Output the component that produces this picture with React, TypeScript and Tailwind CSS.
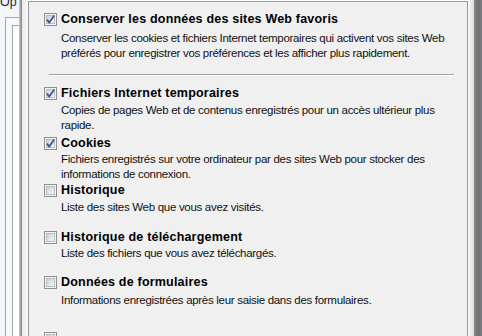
import React from 'react'

type Item = {
  label: string
  checked: boolean
  lines: string[]
  mt: string
  dmt: string
}

const TOP_ITEM: Item = {
  label: 'Conserver les données des sites Web favoris',
  checked: true,
  lines: [
    'Conserver les cookies et fichiers Internet temporaires qui activent vos sites Web',
    'préférés pour enregistrer vos préférences et les afficher plus rapidement.',
  ],
  mt: 'mt-[10px]',
  dmt: 'mt-[4px]',
}

const ITEMS: Item[] = [
  {
    label: 'Fichiers Internet temporaires',
    checked: true,
    lines: [
      'Copies de pages Web et de contenus enregistrés pour un accès ultérieur plus',
      'rapide.',
    ],
    mt: 'mt-[10px]',
    dmt: 'mt-[2px]',
  },
  {
    label: 'Cookies',
    checked: true,
    lines: [
      'Fichiers enregistrés sur votre ordinateur par des sites Web pour stocker des',
      'informations de connexion.',
    ],
    mt: 'mt-[3px]',
    dmt: 'mt-[1px]',
  },
  {
    label: 'Historique',
    checked: false,
    lines: ['Liste des sites Web que vous avez visités.'],
    mt: 'mt-[1px]',
    dmt: 'mt-[2px]',
  },
  {
    label: 'Historique de téléchargement',
    checked: false,
    lines: ['Liste des fichiers que vous avez téléchargés.'],
    mt: 'mt-[15px]',
    dmt: 'mt-[1px]',
  },
  {
    label: 'Données de formulaires',
    checked: false,
    lines: ['Informations enregistrées après leur saisie dans des formulaires.'],
    mt: 'mt-[14px]',
    dmt: 'mt-[3px]',
  },
  {
    // next row, only the top of its box is in view
    label: '',
    checked: false,
    lines: [],
    mt: 'mt-[23px]',
    dmt: 'mt-[2px]',
  },
]

function CheckBox({ checked }: { checked: boolean }) {
  return (
    <svg width="13" height="13" viewBox="0 0 13 13" className="shrink-0">
      <defs>
        <linearGradient id="cbfill" x1="0" y1="0" x2="1" y2="1">
          <stop offset="0" stopColor="#cdd0d5" />
          <stop offset="1" stopColor="#f7f7f7" />
        </linearGradient>
      </defs>
      <rect x="0.5" y="0.5" width="12" height="12" fill="#f4f4f4" stroke="#8e8f8f" />
      <rect x="2.5" y="2.5" width="8" height="8" fill="url(#cbfill)" stroke="#b9bcc1" />
      {checked && (
        <path d="M3 6.6 L5.3 9.6 L10.2 2.6" fill="none" stroke="#3b569a" strokeWidth="1.8" strokeLinejoin="round" />
      )}
    </svg>
  )
}

function Option({ item }: { item: Item }) {
  return (
    <div>
      <div className={`${item.mt} flex items-center gap-[4px] h-[15px] pl-[15px]`}>
        <CheckBox checked={item.checked} />
        {item.label && (
          <span className="font-bold text-[12.5px] tracking-[0.2px] whitespace-nowrap text-black">{item.label}</span>
        )}
      </div>
      {item.lines.length > 0 && (
        <div className={`${item.dmt} pl-[32px] text-[11.5px] tracking-[-0.3px] text-[#111]`}>
          {item.lines.map(l => (
            <div key={l} className="h-[15px] whitespace-nowrap">{l}</div>
          ))}
        </div>
      )}
    </div>
  )
}

export default function App() {
  return (
    <div
      className="w-[482px] h-[336px] flex overflow-hidden leading-[15px]"
      style={{ fontFamily: '"Liberation Sans", Arial, sans-serif' }}
    >
      {/* window behind the dialog */}
      <div className="w-[19px] shrink-0 bg-[#f3f6fa] overflow-hidden">
        <div className="-mt-[5px] text-[12.5px] leading-[14px] text-[#1c2b3f] whitespace-nowrap">Op</div>
        <div className="ml-[5px] mt-[8px] h-full border-l border-t border-[#a5a5a5] bg-[#f7f8fa]">
          <div className="ml-[6px] mt-[7px] h-full border-l border-t border-[#a5a5a5] bg-white" />
        </div>
      </div>

      {/* dialog frame, left */}
      <div className="w-[3px] shrink-0 bg-gradient-to-r from-[#c9cbce] to-[#7f8183]" />
      <div className="w-[6px] shrink-0 bg-gradient-to-r from-[#e9ebee] to-[#f7f7f7]" />

      {/* client area */}
      <div className="w-[440px] shrink-0 mt-[1px] bg-[#f0f0f0] border-l border-t border-r border-[#9a9a9a]">
        <Option item={TOP_ITEM} />
        <div className="mt-[13px] ml-[20px] w-[405px] border-t border-[#a0a0a0] border-b border-b-white" />
        {ITEMS.map((it, i) => (
          <Option key={i} item={it} />
        ))}
      </div>

      {/* dialog frame, right */}
      <div className="w-[6px] shrink-0 bg-gradient-to-r from-[#f9f9f9] to-[#dcdcdc]" />
      <div className="w-[8px] shrink-0 bg-gradient-to-r from-[#8a8b8c] via-[#6e6f70] to-[#7b7c7d]" />
    </div>
  )
}
